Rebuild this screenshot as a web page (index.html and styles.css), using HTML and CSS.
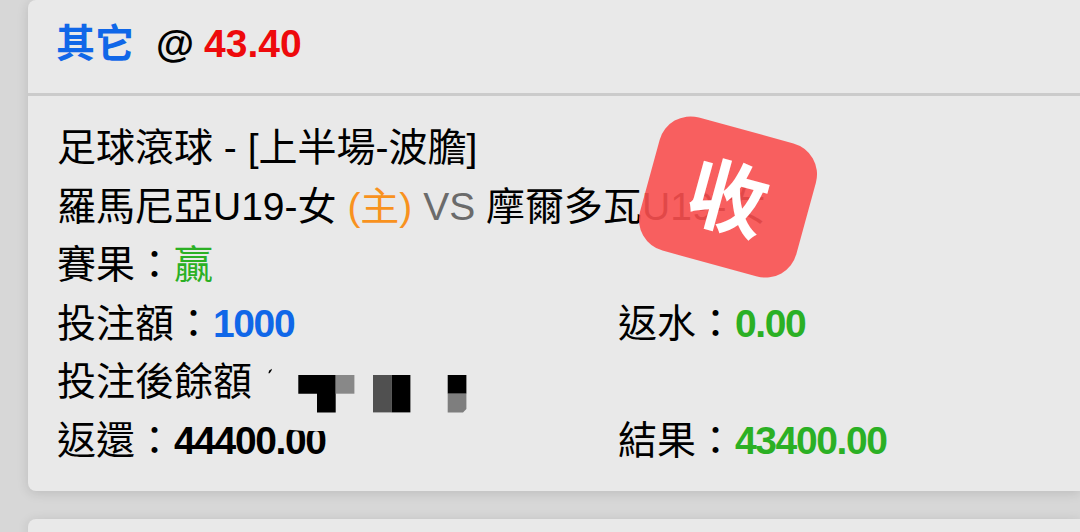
FILE: index.html
```
<!doctype html>
<html lang="zh-Hant">
<head>
  <meta charset="utf-8">
  <meta name="viewport" content="width=device-width, initial-scale=1.0">
  <title>投注記錄</title>
  <link rel="stylesheet" href="styles.css">
</head>
<body>
<div class="bets">
  <div class="bet">
    <div class="bet-head">
      <span class="pick">其它</span>
      <span class="at">@</span>
      <span class="odds">43.40</span>
    </div>
    <div class="bet-body">
      <div class="row">足球滾球 - [上半場-波膽]</div>
      <div class="row">羅馬尼亞U19-女 <span class="home">(主)</span> <span class="vs">VS</span> 摩爾多瓦U19-女</div>
      <div class="row">賽果：<span class="win">贏</span></div>
      <div class="row cols">
        <div>投注額：<b class="stake">1000</b></div>
        <div>返水：<b class="green">0.00</b></div>
      </div>
      <div class="row">投注後餘額</div>
      <div class="row cols">
        <div>返還：<b>44400.00</b></div>
        <div>結果：<b class="green">43400.00</b></div>
      </div>
      <!-- hidden balance -->
      <svg class="mosaic" width="200" height="64" viewBox="0 0 200 64">
        <path class="cover" d="M18 45H70V63H36L18 61.5Z"/>
        <path d="M0.4 5.2L1.2 2.5L4 0.8L3.4 2.8L1.6 5.2Z"/>
        <path d="M30.3 7H67.7V44.4H49V25.7H30.3Z"/>
        <path fill="#888" d="M67.7 7H86.4V25.7H67.7Z"/>
        <path fill="#505050" d="M105 7H123.7V44.4H105Z"/>
        <path d="M123.7 7H142.4V44.4H123.7Z"/>
        <path d="M179.7 7H198.4V25.7H179.7Z"/>
        <path fill="#7e7e7e" d="M179.7 25.7H198.4V41L195 44.4H179.7Z"/>
      </svg>
      <div class="stamp"><span>收</span></div>
    </div>
  </div>
  <div class="bet next"></div>
</div>
</body>
</html>
```
FILE: styles.css
```
body {
  margin: 0;
  height: 532px;
  overflow: hidden;
  background: #d7d7d7;
  color: #000;
  font-family: "Liberation Sans", "Noto Sans CJK TC", sans-serif;
  font-size: 39px;
}
.bets {
  display: flex;
  flex-direction: column;
  gap: 28px;
  padding-left: 28px;
}
.bet {
  background: #e9e9e9;
  border-radius: 8px 0 0 8px;
  box-shadow: 0 2px 12px rgba(0, 0, 0, .13);
}
.bet-head {
  display: flex;
  box-sizing: border-box;
  height: 96px;
  padding: 15px 29px 0 28px;
  border-bottom: 3px solid #cbcbcb;
  line-height: 58px;
  font-weight: bold;
}
.pick {
  margin-right: 22px;
  color: #1067e8;
}
.at {
  margin-right: 10px;
}
.odds {
  color: #ee0a0c;
}
.bet-body {
  position: relative;
  box-sizing: border-box;
  height: 395px;
  padding: 23px 29px 0;
}
.row {
  height: 58.6px;
  line-height: 58.6px;
  white-space: nowrap;
}
.row b {
  letter-spacing: -1.4px;
}
.cols {
  display: grid;
  grid-template-columns: 561px 1fr;
}
.home {
  color: #f8921e;
}
.vs {
  color: #6b6b6b;
}
.win,
.green {
  color: #2bb024;
}
.stake {
  color: #1067e8;
}
.mosaic {
  position: absolute;
  left: 240px;
  top: 272px;
}
.cover {
  fill: #e9e9e9;
}
.stamp {
  position: absolute;
  left: 619px;
  top: 32px;
  display: flex;
  align-items: center;
  justify-content: center;
  box-sizing: border-box;
  width: 162px;
  height: 138px;
  padding-top: 4px;
  border-radius: 32px;
  background: rgba(249, 80, 80, .9);
  color: #fff;
  font-size: 79px;
  font-weight: bold;
  line-height: 1;
  transform: rotate(15.3deg);
}
.next {
  height: 13px;
  border-radius: 8px 0 0 0;
}
```
